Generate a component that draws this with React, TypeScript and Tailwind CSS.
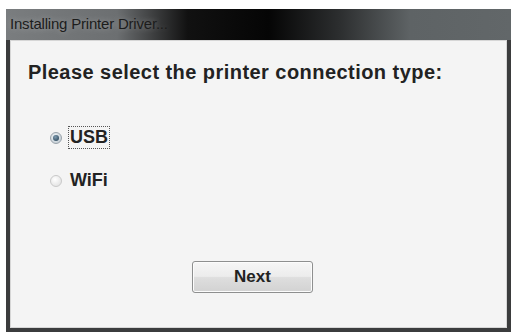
const font = { fontFamily: '"Liberation Sans", Arial, sans-serif' };

const Radio = ({ checked }: { checked?: boolean }) => (
  <span
    className={
      "relative flex h-[12px] w-[12px] items-center justify-center rounded-full border " +
      (checked
        ? "border-[#9aa3ab] bg-[radial-gradient(circle_at_40%_35%,#f2f6f9,#b9c4cc)]"
        : "border-[#c9c9c9] bg-[radial-gradient(circle_at_40%_35%,#ffffff,#dcdcdc)]")
    }
  >
    {checked && <span className="h-[6px] w-[6px] rounded-full bg-[radial-gradient(circle_at_40%_35%,#7e9bb0,#1f3a4d)]" />}
  </span>
);

export default function App() {
  return (
    <div className="h-[334px] w-[515px] overflow-hidden bg-white pl-[6px] pt-[9px]" style={font}>
      <div className="flex h-[323px] w-[505px] flex-col bg-[#3b3c3d]">
        {/* title bar */}
        <div className="flex h-[31px] shrink-0 items-center bg-[linear-gradient(90deg,#7a7d7f_0%,#6c6f71_22%,#111_36%,#050505_52%,#2c2e2f_66%,#5e6365_80%,#626769_100%)] pl-[4px]">
          <span className="text-[15px] tracking-[-0.2px] text-[#1c1c1c] [text-shadow:0_0_6px_rgba(255,255,255,0.35)]">
            Installing Printer Driver...
          </span>
        </div>
        {/* body */}
        <div className="mx-[4px] mb-[4px] flex flex-1 flex-col border border-[#d6d6d6] bg-[#f4f4f4] pl-[17px] pt-[20px]">
          <div className="text-[20px] font-bold leading-[22px] tracking-[0.45px] text-[#222]">
            Please select the printer connection type:
          </div>
          <div className="mt-[43px] flex items-center gap-[6px] pl-[22px]">
            <Radio checked />
            <span className="border border-dotted border-[#555] px-[1px] text-[18px] font-bold leading-[21px] text-[#222]">
              USB
            </span>
          </div>
          <div className="mt-[21px] flex items-center gap-[6px] pl-[22px]">
            <Radio />
            <span className="px-[2px] text-[18px] font-bold leading-[21px] text-[#222]">WiFi</span>
          </div>
          <div className="mt-[70px] flex pl-[164px]">
            <button className="flex h-[32px] w-[121px] items-center justify-center rounded-[3px] border border-[#8e8f8f] bg-[linear-gradient(180deg,#f6f6f6_0%,#ececec_48%,#dedede_52%,#d2d2d2_100%)] text-[17px] font-bold text-[#222] shadow-[inset_0_0_0_1px_#fcfcfc]">
              Next
            </button>
          </div>
        </div>
      </div>
    </div>
  );
}
